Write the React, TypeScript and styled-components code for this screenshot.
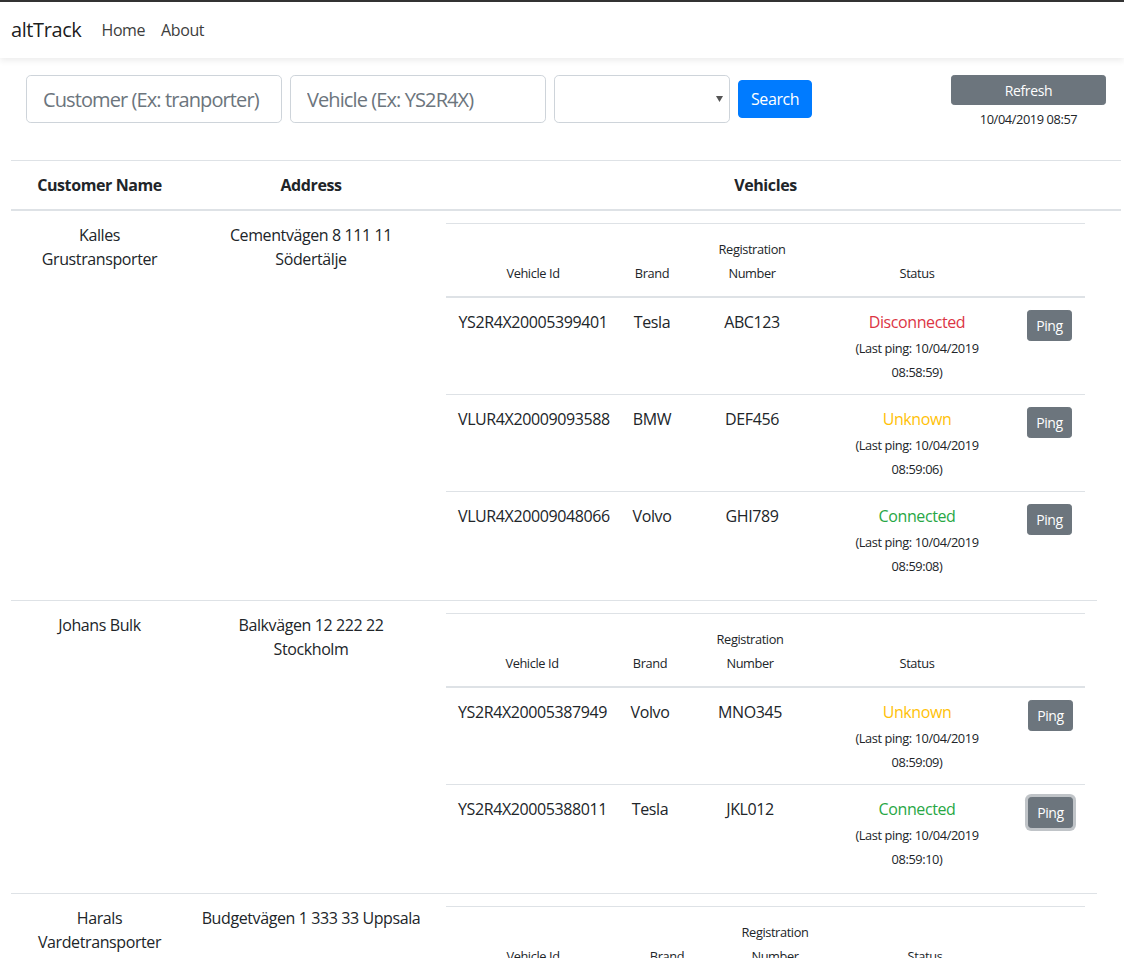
import React from "react";
import styled, { createGlobalStyle } from "styled-components";

const GlobalStyle = createGlobalStyle`
  html, body { margin: 0; padding: 0; background: #fff; }
  body {
    font-family: "Open Sans", "Noto Sans", sans-serif;
    font-size: 16px;
    line-height: 1.5;
    letter-spacing: -0.025em;
    color: #212529;
  }
  *, *::before, *::after { box-sizing: border-box; }
`;

const Navbar = styled.nav`
  display: flex;
  align-items: center;
  height: 58px;
  border-top: 2px solid #333;
  padding: 0 11px;
  background: #fff;
  box-shadow: 0 3px 6px rgba(0, 0, 0, 0.07);
  position: relative;
  z-index: 1;
`;

const Brand = styled.a`
  font-size: 20px;
  color: rgba(0, 0, 0, 0.9);
  margin-right: 12px;
  text-decoration: none;
`;

const NavLink = styled.a`
  padding: 0 8px;
  color: #3d3d3d;
  text-decoration: none;
  font-size: 16px;
`;

const Main = styled.main`
  padding: 17px 11px 0;
`;

const SearchRow = styled.div`
  display: flex;
  justify-content: space-between;
  align-items: flex-start;
  height: 48px;
  padding: 0 7px 0 15px;
`;

const SearchForm = styled.form`
  display: flex;
  align-items: center;
  gap: 8px;
`;

const Input = styled.input`
  width: 256px;
  height: 48px;
  padding: 8px 14px 8px 16px;
  font-family: inherit;
  font-size: 20px;
  letter-spacing: -0.045em;
  line-height: 1.5;
  color: #495057;
  border: 1px solid #ced4da;
  border-radius: 4.8px;
  background: #fff;
  outline: none;
  &::placeholder { color: #6c757d; }
`;

const SelectBox = styled.div`
  display: flex;
  align-items: center;
  width: 176px;
  height: 48px;
  border: 1px solid #ced4da;
  border-radius: 4.8px;
  background: #fff;
  padding-right: 6px;
`;

const SelectEl = styled.select`
  flex: 1;
  height: 100%;
  border: none;
  background: transparent;
  appearance: none;
  font-family: inherit;
  font-size: 20px;
  outline: none;
`;

const Button = styled.button<{ $variant: "primary" | "secondary"; $size?: "sm" | "md"; $focused?: boolean }>`
  font-family: inherit;
  letter-spacing: inherit;
  color: #fff;
  border: 1px solid ${(p) => (p.$variant === "primary" ? "#007bff" : "#6c757d")};
  background: ${(p) => (p.$variant === "primary" ? "#007bff" : "#6c757d")};
  font-size: ${(p) => (p.$size === "sm" ? "14px" : "16px")};
  line-height: 1.5;
  padding: ${(p) => (p.$size === "sm" ? "4px 8px" : "6px 12px")};
  border-radius: ${(p) => (p.$size === "sm" ? "3.2px" : "4px")};
  box-shadow: ${(p) => (p.$focused ? "0 0 0 3px rgba(130, 138, 145, 0.5)" : "none")};
  cursor: pointer;
`;

const RefreshBox = styled.div`
  display: flex;
  flex-direction: column;
  align-items: center;
  width: 155px;
`;

const RefreshButton = styled(Button)`
  width: 100%;
  height: 30px;
  padding-top: 3px;
  padding-bottom: 3px;
`;

const Stamp = styled.div`
  margin-top: 4px;
  font-size: 12.8px;
  line-height: 20px;
`;

const Table = styled.div`
  margin-top: 37px;
`;

const HeadRow = styled.div`
  display: grid;
  grid-template-columns: 177px 246px 663px 24px;
  width: 1110px;
  border-top: 1px solid #dee2e6;
  border-bottom: 2px solid #dee2e6;
`;

const HeadCell = styled.div`
  padding: 12px;
  font-weight: 700;
  text-align: center;
`;

const BodyRow = styled.div`
  display: grid;
  grid-template-columns: 177px 246px 663px;
  width: 1086px;
  & + & { border-top: 1px solid #dee2e6; }
`;

const Cell = styled.div`
  padding: 12px;
  text-align: center;
`;

const Line = styled.div`
  white-space: nowrap;
`;

const NestedTable = styled.div`
  width: 639px;
  border-top: 1px solid #dee2e6;
`;

const NestedHead = styled.div<{ $cols: string }>`
  display: grid;
  grid-template-columns: ${(p) => p.$cols};
  border-bottom: 2px solid #dee2e6;
  align-items: end;
`;

const NestedHeadCell = styled.div`
  padding: 13px 12px 11px;
  font-size: 12.8px;
  line-height: 24px;
  text-align: center;
`;

const NestedRow = styled.div<{ $cols: string }>`
  display: grid;
  grid-template-columns: ${(p) => p.$cols};
  align-items: start;
  & + & { border-top: 1px solid #dee2e6; }
`;

const NestedCell = styled.div`
  padding: 12px;
  text-align: center;
  white-space: nowrap;
`;

const statusColors: Record<string, string> = {
  Disconnected: "#dc3545",
  Unknown: "#ffc107",
  Connected: "#28a745",
};

const StatusText = styled.div<{ $color: string }>`
  color: ${(p) => p.$color};
`;

const PingNote = styled.div`
  font-size: 12.8px;
  line-height: 24px;
  padding-top: 2px;
  margin-bottom: -2px;
`;

type Vehicle = { id: string; brand: string; reg: string; status: string; date: string; time: string; focused?: boolean };
type Customer = { name: string[]; address: string[]; cols: string; vehicles: Vehicle[] };

const customers: Customer[] = [
  {
    name: ["Kalles", "Grustransporter"],
    address: ["Cementvägen 8 111 11", "Södertälje"],
    cols: "174px 64px 136px 194px 71px",
    vehicles: [
      { id: "YS2R4X20005399401", brand: "Tesla", reg: "ABC123", status: "Disconnected", date: "10/04/2019", time: "08:58:59" },
      { id: "VLUR4X20009093588", brand: "BMW", reg: "DEF456", status: "Unknown", date: "10/04/2019", time: "08:59:06" },
      { id: "VLUR4X20009048066", brand: "Volvo", reg: "GHI789", status: "Connected", date: "10/04/2019", time: "08:59:08" },
    ],
  },
  {
    name: ["Johans Bulk"],
    address: ["Balkvägen 12 222 22", "Stockholm"],
    cols: "172px 64px 136px 198px 69px",
    vehicles: [
      { id: "YS2R4X20005387949", brand: "Volvo", reg: "MNO345", status: "Unknown", date: "10/04/2019", time: "08:59:09" },
      { id: "YS2R4X20005388011", brand: "Tesla", reg: "JKL012", status: "Connected", date: "10/04/2019", time: "08:59:10", focused: true },
    ],
  },
  {
    name: ["Harals", "Vardetransporter"],
    address: ["Budgetvägen 1 333 33 Uppsala"],
    cols: "174px 94px 122px 178px 71px",
    vehicles: [
      { id: "YS2R4X20005387111", brand: "Scania", reg: "PQR678", status: "Connected", date: "10/04/2019", time: "08:59:12" },
    ],
  },
];

const Lines = ({ lines }: { lines: string[] }) => (
  <>
    {lines.map((l, i) => (
      <Line key={i}>{l}</Line>
    ))}
  </>
);

export default function App() {
  return (
    <>
      <GlobalStyle />
      <Navbar>
        <Brand href="#">altTrack</Brand>
        <NavLink href="#">Home</NavLink>
        <NavLink href="#">About</NavLink>
      </Navbar>
      <Main>
        <SearchRow>
          <SearchForm onSubmit={(e) => e.preventDefault()}>
            <Input placeholder="Customer (Ex: tranporter)" />
            <Input placeholder="Vehicle (Ex: YS2R4X)" />
            <SelectBox>
              <SelectEl defaultValue="">
                <option value=""></option>
                <option value="Connected">Connected</option>
                <option value="Disconnected">Disconnected</option>
                <option value="Unknown">Unknown</option>
              </SelectEl>
              <svg width="7" height="6" viewBox="0 0 7 6">
                <path d="M0 0 H7 L3.5 6 Z" fill="#555" />
              </svg>
            </SelectBox>
            <Button $variant="primary" type="submit">Search</Button>
          </SearchForm>
          <RefreshBox>
            <RefreshButton $variant="secondary" $size="sm">Refresh</RefreshButton>
            <Stamp>10/04/2019 08:57</Stamp>
          </RefreshBox>
        </SearchRow>
        <Table>
          <HeadRow>
            <HeadCell>Customer Name</HeadCell>
            <HeadCell>Address</HeadCell>
            <HeadCell>Vehicles</HeadCell>
            <HeadCell />
          </HeadRow>
          {customers.map((c, ci) => (
            <BodyRow key={ci}>
              <Cell><Lines lines={c.name} /></Cell>
              <Cell><Lines lines={c.address} /></Cell>
              <Cell>
                <NestedTable>
                  <NestedHead $cols={c.cols}>
                    <NestedHeadCell>Vehicle Id</NestedHeadCell>
                    <NestedHeadCell>Brand</NestedHeadCell>
                    <NestedHeadCell>Registration<br />Number</NestedHeadCell>
                    <NestedHeadCell>Status</NestedHeadCell>
                    <NestedHeadCell />
                  </NestedHead>
                  {c.vehicles.map((v) => (
                    <NestedRow key={v.id} $cols={c.cols}>
                      <NestedCell>{v.id}</NestedCell>
                      <NestedCell>{v.brand}</NestedCell>
                      <NestedCell>{v.reg}</NestedCell>
                      <NestedCell>
                        <StatusText $color={statusColors[v.status]}>{v.status}</StatusText>
                        <PingNote>
                          (Last ping: {v.date}
                          <br />
                          {v.time})
                        </PingNote>
                      </NestedCell>
                      <NestedCell>
                        <Button $variant="secondary" $size="sm" $focused={v.focused}>Ping</Button>
                      </NestedCell>
                    </NestedRow>
                  ))}
                </NestedTable>
              </Cell>
            </BodyRow>
          ))}
        </Table>
      </Main>
    </>
  );
}
